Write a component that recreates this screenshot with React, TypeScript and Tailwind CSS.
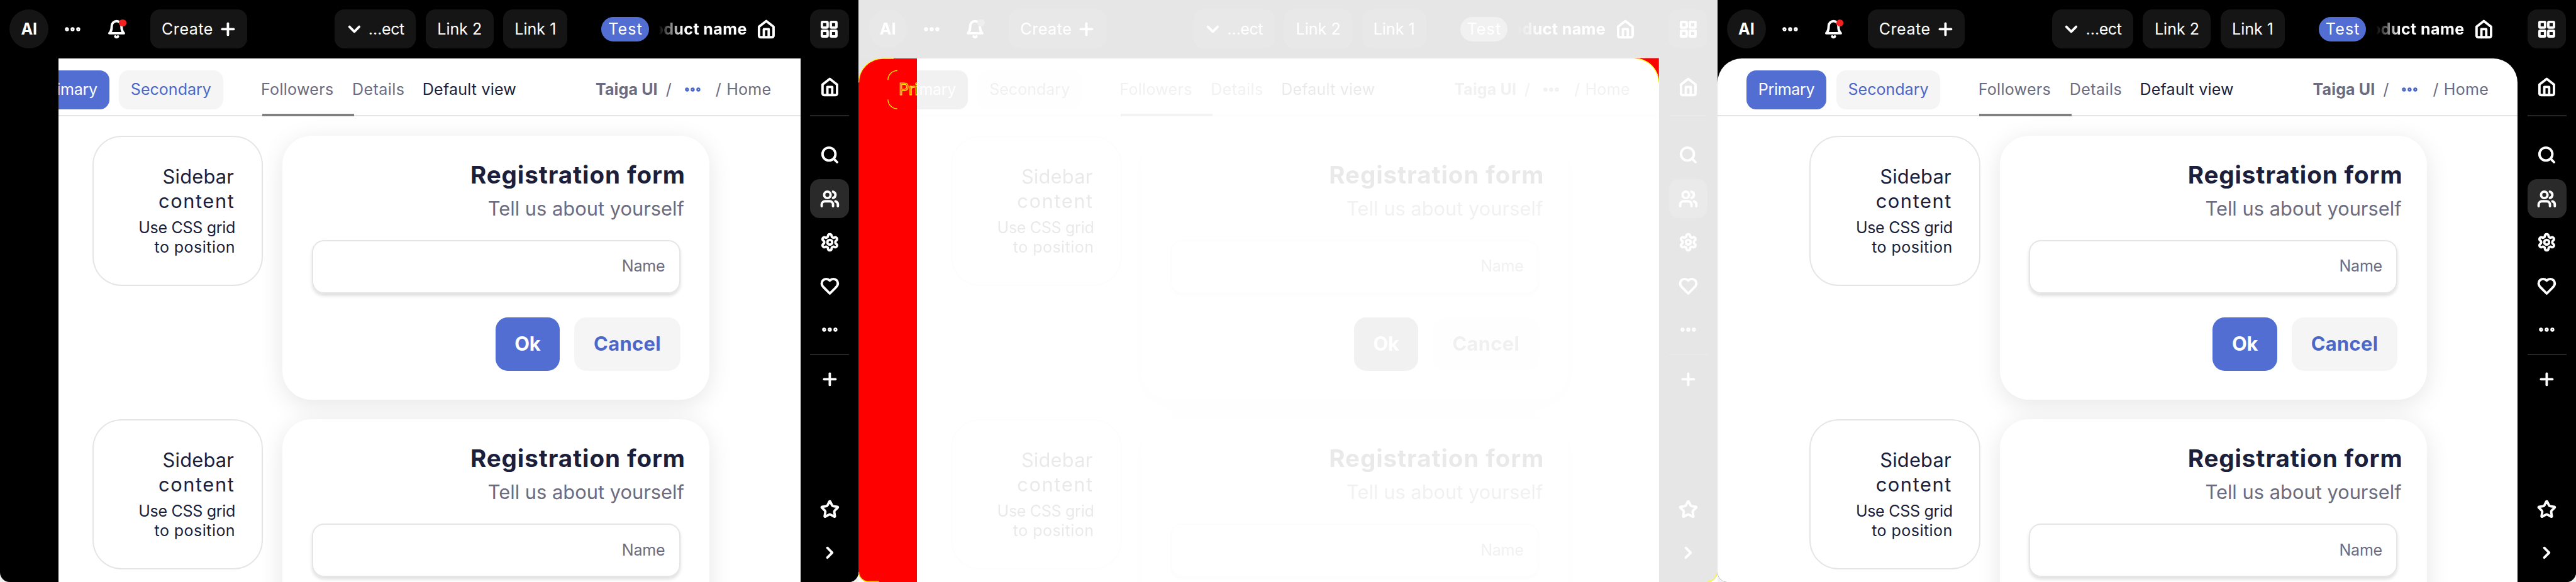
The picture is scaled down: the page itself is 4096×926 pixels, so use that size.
import React from "react";

type IconProps = { children: React.ReactNode };

function Icon({ children }: IconProps) {
  return (
    <svg
      viewBox="0 0 24 24"
      className="size-4 shrink-0 overflow-visible"
      fill="none"
      stroke="currentColor"
      strokeWidth={3}
      strokeLinecap="round"
      strokeLinejoin="round"
    >
      {children}
    </svg>
  );
}

const HomeIcon = () => (
  <Icon>
    <path d="m3 9 9-7 9 7v11a2 2 0 0 1-2 2H5a2 2 0 0 1-2-2z" />
    <polyline points="9 22 9 12 15 12 15 22" />
  </Icon>
);

const DotsIcon = () => (
  <Icon>
    <circle cx="5" cy="12" r="1.45" strokeWidth={2.1} />
    <circle cx="12" cy="12" r="1.45" strokeWidth={2.1} />
    <circle cx="19" cy="12" r="1.45" strokeWidth={2.1} />
  </Icon>
);

const BellIcon = () => (
  <Icon>
    <path d="M6 8a6 6 0 0 1 12 0c0 7 3 9 3 9H3s3-2 3-9" />
    <path d="M10.3 21a1.94 1.94 0 0 0 3.4 0" />
  </Icon>
);

const PlusIcon = () => (
  <Icon>
    <path d="M5 12h14" />
    <path d="M12 5v14" />
  </Icon>
);

const ChevronDownIcon = () => (
  <Icon>
    <path d="m6 9 6 6 6-6" />
  </Icon>
);

const ChevronRightIcon = () => (
  <Icon>
    <path d="m9 18 6-6-6-6" />
  </Icon>
);

const GridIcon = () => (
  <Icon>
    <rect x="3" y="3" width="7" height="7" rx="1" />
    <rect x="14" y="3" width="7" height="7" rx="1" />
    <rect x="14" y="14" width="7" height="7" rx="1" />
    <rect x="3" y="14" width="7" height="7" rx="1" />
  </Icon>
);

const SearchIcon = () => (
  <Icon>
    <circle cx="11" cy="11" r="8" />
    <path d="m21 21-4.3-4.3" />
  </Icon>
);

const UsersIcon = () => (
  <Icon>
    <path d="M16 21v-2a4 4 0 0 0-4-4H6a4 4 0 0 0-4 4v2" />
    <circle cx="9" cy="7" r="4" />
    <path d="M22 21v-2a4 4 0 0 0-3-3.87" />
    <path d="M16 3.13a4 4 0 0 1 0 7.75" />
  </Icon>
);

const SettingsIcon = () => (
  <Icon>
    <path d="M12.22 2h-.44a2 2 0 0 0-2 2v.18a2 2 0 0 1-1 1.73l-.43.25a2 2 0 0 1-2 0l-.15-.08a2 2 0 0 0-2.73.73l-.22.38a2 2 0 0 0 .73 2.73l.15.1a2 2 0 0 1 1 1.72v.51a2 2 0 0 1-1 1.74l-.15.09a2 2 0 0 0-.73 2.73l.22.38a2 2 0 0 0 2.73.73l.15-.08a2 2 0 0 1 2 0l.43.25a2 2 0 0 1 1 1.73V20a2 2 0 0 0 2 2h.44a2 2 0 0 0 2-2v-.18a2 2 0 0 1 1-1.73l.43-.25a2 2 0 0 1 2 0l.15.08a2 2 0 0 0 2.73-.73l.22-.39a2 2 0 0 0-.73-2.73l-.15-.08a2 2 0 0 1-1-1.74v-.5a2 2 0 0 1 1-1.74l.15-.09a2 2 0 0 0 .73-2.73l-.22-.38a2 2 0 0 0-2.73-.73l-.15.08a2 2 0 0 1-2 0l-.43-.25a2 2 0 0 1-1-1.73V4a2 2 0 0 0-2-2z" />
    <circle cx="12" cy="12" r="3" />
  </Icon>
);

const HeartIcon = () => (
  <Icon>
    <path d="M19 14c1.49-1.46 3-3.21 3-5.5A5.5 5.5 0 0 0 16.5 3c-1.76 0-3 .5-4.5 2-1.5-1.5-2.74-2-4.5-2A5.5 5.5 0 0 0 2 8.5c0 2.3 1.5 4.05 3 5.5l7 7Z" />
  </Icon>
);

const StarIcon = () => (
  <Icon>
    <path d="M11.525 2.295a.53.53 0 0 1 .95 0l2.31 4.679a2.123 2.123 0 0 0 1.595 1.16l5.166.756a.53.53 0 0 1 .294.904l-3.736 3.638a2.123 2.123 0 0 0-.611 1.878l.882 5.14a.53.53 0 0 1-.771.56l-4.618-2.428a2.122 2.122 0 0 0-1.973 0L6.396 21.01a.53.53 0 0 1-.77-.56l.881-5.139a2.122 2.122 0 0 0-.611-1.879L2.16 9.795a.53.53 0 0 1 .294-.906l5.165-.755a2.122 2.122 0 0 0 1.597-1.16z" />
  </Icon>
);

function Header() {
  return (
    <header className="flex h-12 shrink-0 items-center bg-black pl-2 pr-2 text-[13px] leading-5 text-white">
      <div className="flex size-8 items-center justify-center rounded-full bg-[#151515] font-bold">AI</div>
      <div className="ml-1 flex size-8 items-center justify-center">
        <DotsIcon />
      </div>
      <div className="relative ml-1 flex size-8 items-center justify-center">
        <BellIcon />
        <span className="absolute left-[18px] top-2 size-1.5 rounded-full bg-[#f52222]" />
      </div>
      <div className="ml-3 flex h-8 w-20 items-center justify-between rounded-[8px] bg-[#151515] pl-[9.3px] pr-2">
        <span className="whitespace-nowrap tracking-[0.28px]">Create</span>
        <PlusIcon />
      </div>
      <div className="ml-[72px] flex h-8 w-[67px] items-center justify-between rounded-[8px] bg-[#151515] pl-2 pr-[9.7px]">
        <ChevronDownIcon />
        <span className="whitespace-nowrap tracking-[-0.25px]">…ect</span>
      </div>
      <div className="ml-2 flex h-8 w-14 items-center justify-center rounded-[8px] bg-[#151515]">
        <span className="whitespace-nowrap">Link 2</span>
      </div>
      <div className="ml-2 flex h-8 w-[53px] items-center justify-center rounded-[8px] bg-[#151515]">
        <span className="whitespace-nowrap">Link 1</span>
      </div>
      <div className="ml-7 flex h-5 w-[39px] items-center justify-center rounded-[10px] bg-[#526ed3]">
        <span className="whitespace-nowrap pl-[0.6px] tracking-[0.59px]">Test</span>
      </div>
      <div className="ml-2 flex w-[73px] justify-end overflow-hidden font-bold [mask-image:linear-gradient(to_right,transparent,black_20px)]">
        <span className="whitespace-nowrap tracking-[0.2px]">oduct name</span>
      </div>
      <div className="ml-2">
        <HomeIcon />
      </div>
      <div className="ml-7 flex size-8 items-center justify-center rounded-[8px] bg-[#151515]">
        <GridIcon />
      </div>
    </header>
  );
}

function NavItem({ children, active = false }: { children: React.ReactNode; active?: boolean }) {
  return (
    <div className={active ? "flex size-8 items-center justify-center rounded-[8px] bg-[#2a2a2a]" : "flex size-8 items-center justify-center"}>
      {children}
    </div>
  );
}

function Rail() {
  return (
    <aside className="flex w-12 shrink-0 flex-col items-center bg-black pb-2 pt-2 text-white">
      <NavItem><HomeIcon /></NavItem>
      <div className="mt-[7px] h-px w-8 bg-[#262626]" />
      <div className="mt-4 flex flex-col gap-1">
        <NavItem><SearchIcon /></NavItem>
        <NavItem active><UsersIcon /></NavItem>
        <NavItem><SettingsIcon /></NavItem>
        <NavItem><HeartIcon /></NavItem>
        <NavItem><DotsIcon /></NavItem>
      </div>
      <div className="mt-1 h-px w-8 bg-[#262626]" />
      <div className="mt-1">
        <NavItem><PlusIcon /></NavItem>
      </div>
      <div className="mt-auto flex flex-col gap-1">
        <NavItem><StarIcon /></NavItem>
        <NavItem><ChevronRightIcon /></NavItem>
      </div>
    </aside>
  );
}

function SubHeader() {
  return (
    <div className="shrink-0">
      <div className="flex h-[46px] pl-6 pr-[24px] text-[13px] leading-8 text-[#6c6c80]">
        <div className="mt-2.5 flex h-8 w-[66px] items-center justify-center rounded-[8px] bg-[#526ed3] text-white">
          <span className="whitespace-nowrap tracking-[-0.17px]">Primary</span>
        </div>
        <div className="ml-2 mt-2.5 flex h-8 w-[86px] items-center justify-center rounded-[8px] bg-[#f5f5f5] text-[#4b68c9]">
          <span className="whitespace-nowrap">Secondary</span>
        </div>
        <div className="ml-8 flex w-[75px] pt-2.5">
          <span className="-ml-[0.8px] whitespace-nowrap tracking-[0.15px]">Followers</span>
        </div>
        <span className="-ml-[0.6px] mt-2.5 w-[58px] whitespace-nowrap tracking-[0.22px]">Details</span>
        <span className="mt-2.5 whitespace-nowrap tracking-[0.1px] text-[#1b1f3b]">Default view</span>
        <div className="ml-auto mt-2.5 flex h-8">
          <span className="w-[58px] whitespace-nowrap font-bold tracking-[0.06px]">Taiga UI</span>
          <span className="w-[14px]">/</span>
          <span className="flex h-8 items-center text-[#4b68c9]">
            <DotsIcon />
          </span>
          <span className="ml-[11px] w-[9px]">/</span>
          <span className="whitespace-nowrap tracking-[0.15px]">Home</span>
        </div>
      </div>
      <div className="flex h-0.5 items-end">
        <div className="h-px w-[216px] bg-[#e5e5e5]" />
        <div className="h-0.5 w-[76px] bg-[#808080]" />
        <div className="h-px flex-1 bg-[#e5e5e5]" />
      </div>
    </div>
  );
}

function ContentRow() {
  return (
    <div className="flex h-[218px] shrink-0 items-start gap-4">
      <section className="flex h-[124px] w-[141px] flex-col rounded-[24px] p-6 text-right text-[#1b1f3b] shadow-[inset_0_0_0_1px_#e5e5e5]">
        <div className="text-[16px] leading-5">
          <div className="tracking-[0.1px]">Sidebar</div>
          <div className="-mr-[0.6px] tracking-[0.81px]">content</div>
        </div>
        <div className="-mr-px mt-1 whitespace-nowrap text-[13px] leading-4">
          <div className="tracking-[-0.16px]">Use CSS grid</div>
          <div className="tracking-[0.23px]">to position</div>
        </div>
      </section>
      <section className="flex h-[218px] w-[352px] flex-col rounded-[24px] bg-white px-6 pt-[18px] shadow-[0_4px_20px_rgba(0,0,0,0.1)]">
        <div className="text-right">
          <h2 className="-mr-[4.2px] text-[20px] font-bold leading-7 tracking-[0.47px] text-[#1b1f3b]">Registration form</h2>
          <p className="-mr-[3.2px] mt-0.5 text-[16px] leading-6 text-[#6c6c80]">Tell us about yourself</p>
        </div>
        <div className="mt-3.5 flex h-11 shrink-0 items-center justify-end rounded-[10px] bg-white pr-[12.7px] text-[13px] text-[#6c6c80] shadow-[inset_0_0_0_1px_#e5e5e5,0_2px_3px_rgba(0,0,0,0.12)]">
          <span className="tracking-[-0.13px]">Name</span>
        </div>
        <div className="mt-5 flex justify-end gap-3 text-[16px] font-bold">
          <div className="flex h-11 w-[53px] items-center justify-center rounded-[10px] bg-[#526ed3] text-white">
            <span className="tracking-[-0.13px]">Ok</span>
          </div>
          <div className="flex h-11 w-[87.5px] items-center justify-center rounded-[10px] bg-[#f5f5f5] text-[#4b68c9]">
            <span className="tracking-[0.17px]">Cancel</span>
          </div>
        </div>
      </section>
    </div>
  );
}

function Page() {
  return (
    <div className="flex h-full w-[660px] shrink-0 flex-col">
      <SubHeader />
      <div className="flex min-h-0 flex-1 flex-col gap-4 overflow-hidden pl-[76px] pt-4">
        <ContentRow />
        <ContentRow />
      </div>
    </div>
  );
}

function Screen({ cut = false }: { cut?: boolean }) {
  return (
    <div className="flex h-[480.2px] w-[708px] flex-col overflow-hidden rounded-b-[8px] bg-black">
      <Header />
      <div className="flex min-h-0 flex-1">
        {cut ? (
          <main className="ml-12 flex w-[612px] shrink-0 justify-end overflow-hidden bg-white">
            <Page />
          </main>
        ) : (
          <main className="flex w-[660px] shrink-0 overflow-hidden rounded-t-[20px] bg-white">
            <Page />
          </main>
        )}
        <Rail />
      </div>
    </div>
  );
}

function DiffScreen() {
  return (
    <div className="relative h-[480.2px] w-[708px] overflow-hidden bg-white">
      <div className="opacity-10 grayscale">
        <Screen cut />
      </div>
      <div className="absolute left-0 top-12 h-[432.2px] w-12 overflow-hidden bg-[#e5e5e5]">
        <div className="h-full w-full rounded-bl-[8px] rounded-tl-[20px] bg-[#ff0000]" />
        <span className="absolute left-[33.2px] top-2.5 whitespace-nowrap text-[13px] leading-8 tracking-[-0.17px] text-[#ff0000] [-webkit-text-stroke:0.6px_#ffff00]">
          Pri
        </span>
      </div>
      <svg className="absolute inset-0 size-full" viewBox="0 0 708 480.2" fill="none" stroke="#ffff00" strokeWidth="0.6">
        <path d="M0 472.2A8 8 0 0 0 8 480.2H0Z" fill="#ffffff" stroke="none" />
        <path d="M0.3 68A19.7 19.7 0 0 1 20 48.3h9" />
        <path d="M24.3 66A7.7 7.7 0 0 1 32 58.3" />
        <path d="M24.3 82A7.7 7.7 0 0 0 32 89.7" />
        <path d="M0.3 472A7.7 7.7 0 0 0 8 479.7h9" />
        <path d="M640 48H660V68A20 20 0 0 0 640 48Z" fill="#ff0000" stroke="none" />
        <path d="M640 48.3A19.7 19.7 0 0 1 659.7 68" />
        <path d="M700 479.9A8 8 0 0 0 707.7 472" />
      </svg>
    </div>
  );
}

export default function App() {
  return (
    <div className="h-[926px] w-[4096px] overflow-hidden bg-[#f2f2f2] font-['Inter',sans-serif]">
      <div className="flex w-[2124px] [zoom:1.92844]">
        <Screen cut />
        <DiffScreen />
        <Screen />
      </div>
    </div>
  );
}
